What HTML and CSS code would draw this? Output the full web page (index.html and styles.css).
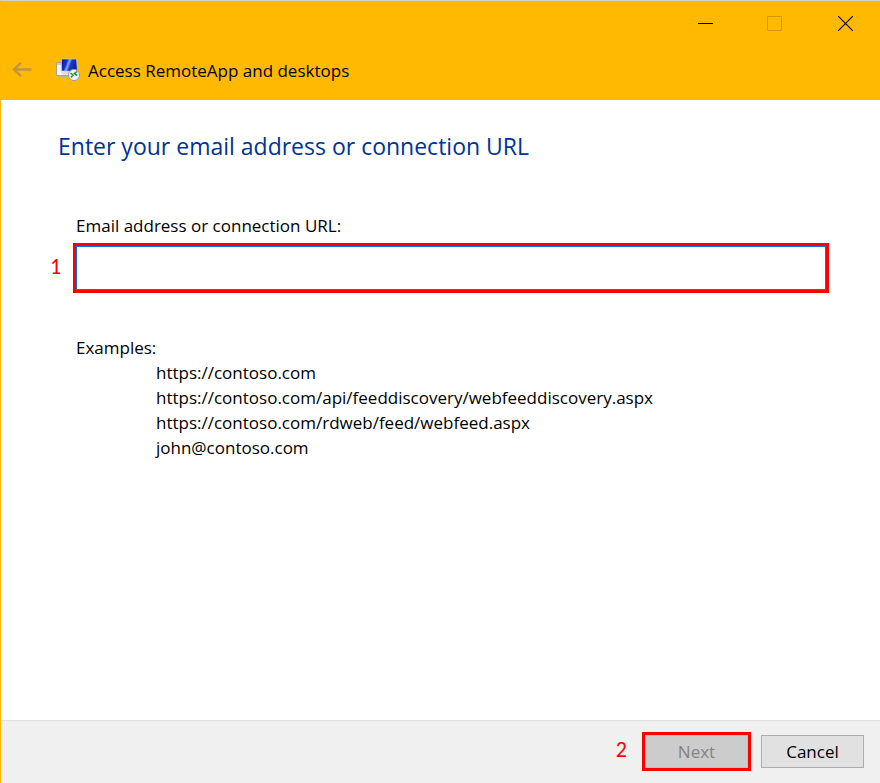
FILE: index.html
```html
<!DOCTYPE html>
<html lang="en">
<head>
<meta charset="utf-8">
<title>Access RemoteApp and desktops</title>
<link rel="stylesheet" href="styles.css">
</head>
<body>
<form class="wizard">
  <header class="titlebar">
    <div class="window-controls">
      <button type="button" class="window-button" aria-label="Minimize">
        <svg width="16" height="16" viewBox="0 0 16 16"><path d="M1 8.5H16" stroke="#000" fill="none"/></svg>
      </button>
      <button type="button" class="window-button" aria-label="Maximize" disabled>
        <svg width="16" height="16" viewBox="0 0 16 16"><path d="M.5 1.5h14v14H.5z" stroke="#cf9808" fill="none"/></svg>
      </button>
      <button type="button" class="window-button" aria-label="Close">
        <svg width="16" height="16" viewBox="0 0 16 16"><path d="M1.200 1.200l14.600 14.600M15.800 1.200L1.200 15.800" stroke="#000" stroke-width="1.1" fill="none"/></svg>
      </button>
    </div>
    <div class="heading">
      <button type="button" class="back" aria-label="Back" disabled>
        <svg width="20" height="16" viewBox="0 0 20 16"><path d="M2 7.500H19.500M9 .8L2 7.500l7 6.700" stroke="#bf9739" stroke-width="2.400" fill="none"/></svg>
      </button>
      <svg class="app-icon" width="24" height="24" viewBox="0 0 24 24" aria-hidden="true">
        <defs>
          <linearGradient id="screen" x1="0" y1="0" x2="1" y2="0.3">
            <stop offset="0" stop-color="#0618a0"/>
            <stop offset="0.35" stop-color="#1230c8"/>
            <stop offset="0.5" stop-color="#8aa4f4"/>
            <stop offset="0.65" stop-color="#1c38c8"/>
            <stop offset="1" stop-color="#0a1fae"/>
          </linearGradient>
        </defs>
        <path d="M.5 4.500H14v13H.5z" fill="#f1f3f5" stroke="#a9a392"/>
        <path d="M1 5h6v2H1z" fill="#c5cbd2"/>
        <path d="M2 18h10l1 2H4z" fill="#c2b58f"/>
        <path d="M5.500 1L20.500 1l1 12.500-16-.5z" fill="url(#screen)" stroke="#c9cdda" stroke-width=".7"/>
        <path d="M5 13.500l9 .3-1 2.700H7z" fill="#d9dce2"/>
        <circle cx="18" cy="17" r="5.600" fill="#eef0ec" stroke="#9c9e98"/>
        <path d="M14.500 15l2.500 2-2 2.500M21 13.500l-2.500 2 2.700 2" stroke="#259344" stroke-width="1.600" fill="none"/>
      </svg>
      <span class="app-title">Access RemoteApp and desktops</span>
    </div>
  </header>
  <main class="page">
    <h1>Enter your email address or connection URL</h1>
    <label class="field-label" for="address">Email address or connection URL:</label>
    <div class="field">
      <span class="step">1</span>
      <div class="highlight field-highlight"><input id="address" type="text"></div>
    </div>
    <section class="examples">
      <p>Examples:</p>
      <ul>
        <li>https://contoso.com</li>
        <li>https://contoso.com/api/feeddiscovery/webfeeddiscovery.aspx</li>
        <li>https://contoso.com/rdweb/feed/webfeed.aspx</li>
        <li>john@contoso.com</li>
      </ul>
    </section>
  </main>
  <footer class="actions">
    <span class="step">2</span>
    <div class="highlight"><button type="button" class="action next" disabled>Next</button></div>
    <button type="button" class="action cancel">Cancel</button>
  </footer>
</form>
</body>
</html>
```
FILE: styles.css
```css
* { box-sizing: border-box; }

body {
  margin: 0;
  font: 17px/25px "Segoe UI", "Open Sans", "Noto Sans", sans-serif;
  color: #000;
}

h1, p, ul { margin: 0; padding: 0; }

button, input { margin: 0; padding: 0; font: inherit; color: inherit; }

svg { display: block; }

.wizard {
  display: flex;
  flex-direction: column;
  min-height: 100vh;
  border-top: 1px solid #d2d2d2;
  border-left: 1px solid #ffb900;
  background: #fff;
}

.titlebar {
  height: 99px;
  background: #ffb900;
}

.window-controls {
  display: flex;
  justify-content: flex-end;
  height: 44px;
}

.window-button {
  display: flex;
  align-items: center;
  justify-content: center;
  width: 70px;
  border: 0;
  background: none;
}

.heading {
  display: flex;
  align-items: center;
  height: 50px;
  padding-left: 11px;
}

.back { border: 0; background: none; }

.app-icon { margin: 0 8px 0 24px; }

.page {
  flex: 1;
  padding: 31px 51px 24px 57px;
}

h1 {
  font-size: 23px;
  line-height: 30px;
  font-weight: 400;
  color: #003399;
}

.field-label {
  display: block;
  margin: 52px 0 5px 18px;
}

.field {
  display: flex;
  align-items: center;
  margin-left: -8px;
}

.step {
  padding-bottom: 2px;
  font: 23px/26px Carlito, "Open Sans", sans-serif;
  font-size: 22px;
  color: #f00;
}

.field .step { width: 23px; }

.highlight {
  display: flex;
  border: 3px solid #f00;
}

.field-highlight { flex: 1; }

input {
  width: 100%;
  height: 44px;
  padding: 0 8px;
  border: 1px solid #0078d7;
  outline: 0;
  background: #fff;
}

.examples { margin: 42px 0 0 18px; }

.examples ul { padding-left: 80px; list-style: none; }

.actions {
  display: flex;
  align-items: center;
  justify-content: flex-end;
  height: 63px;
  padding: 0 16px 2px 0;
  border-top: 1px solid #dfdfdf;
  background: #f0f0f0;
}

.actions .step { margin-right: 15px; }

.action {
  width: 103px;
  height: 33px;
  border: 1px solid #adadad;
  background: #e1e1e1;
}

.next {
  border-color: #bfbfbf;
  background: #ccc;
  color: #838383;
}

.cancel { margin-left: 10px; }
```
